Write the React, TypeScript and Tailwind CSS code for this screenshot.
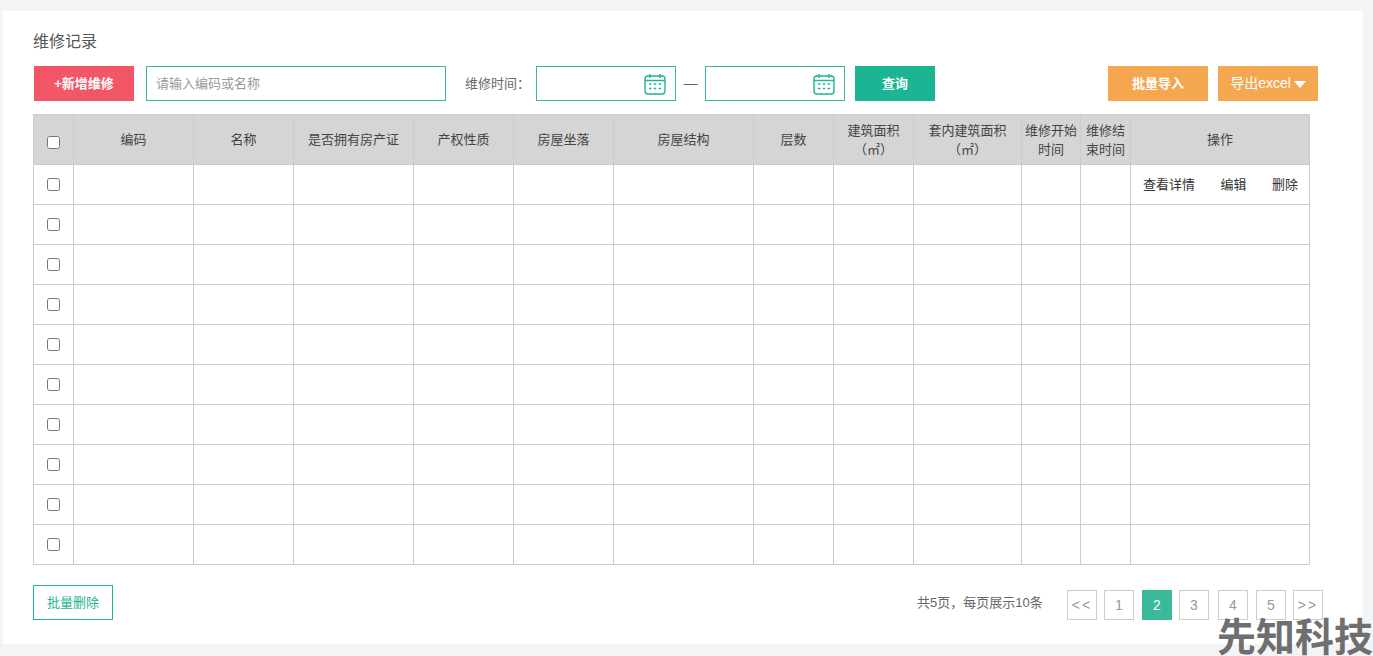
const columns = [
  { width: 'w-[40px]', label: '' },
  { width: 'w-[120px]', label: '编码' },
  { width: 'w-[100px]', label: '名称' },
  { width: 'w-[120px]', label: '是否拥有房产证' },
  { width: 'w-[100px]', label: '产权性质' },
  { width: 'w-[100px]', label: '房屋坐落' },
  { width: 'w-[140px]', label: '房屋结构' },
  { width: 'w-[80px]', label: '层数' },
  { width: 'w-[80px]', label: '建筑面积（㎡）' },
  { width: 'w-[108px]', label: '套内建筑面积（㎡）' },
  { width: 'w-[59px]', label: '维修开始时间' },
  { width: 'w-[50px]', label: '维修结束时间' },
  { width: 'w-[179px]', label: '操作' },
];

const rows = [0, 1, 2, 3, 4, 5, 6, 7, 8, 9];
const pages = [
  { label: '<<', cls: 'w-[30px] mr-[7px] text-[#999] tracking-[2px]' },
  { label: '1', cls: 'w-[30px] mr-[8px] text-[#999]' },
  { label: '2', cls: 'w-[30px] mr-[7px] !border-[#3ab99b] bg-[#3ab99b] text-white' },
  { label: '3', cls: 'w-[30px] mr-[9px] text-[#999]' },
  { label: '4', cls: 'w-[30px] mr-[8px] text-[#999]' },
  { label: '5', cls: 'w-[30px] mr-[7px] text-[#999]' },
  { label: '>>', cls: 'w-[30px] text-[#999] tracking-[2px]' },
];

function CalendarIcon() {
  return (
    <svg viewBox="0 0 22 22" className="h-[22px] w-[22px]" fill="none" stroke="#1fb595">
      <rect x="1" y="3" width="20" height="18" rx="3" strokeWidth="1.4" />
      <path d="M1 7.5h20M6 1v4M16 1v4" strokeWidth="1.4" />
      <path d="M5 11h2.4M9.8 11h2.4M14.6 11h2.4M5 15.5h2.4M9.8 15.5h2.4M14.6 15.5h2.4" strokeWidth="1.6" />
    </svg>
  );
}

function DateInput() {
  return (
    <div className="flex h-[35px] w-[140px] items-center justify-end border border-[#3ab99b] bg-white pr-[9px]">
      <CalendarIcon />
    </div>
  );
}

export default function App() {
  return (
    <div className="relative h-[656px] overflow-hidden bg-[#f3f4f6] pt-[11px] pl-[3px] font-['Liberation_Sans','Noto_Sans_CJK_SC',sans-serif] text-[13px] text-[#555]">
      <div className="h-[633px] w-[1360px] bg-white pt-[20px] pl-[30px]">
        <h1 className="text-[16px] leading-[21px] font-normal text-[#555]">维修记录</h1>

        <div className="mt-[14px] flex h-[35px] items-center">
          <button className="ml-px h-[35px] w-[100px] bg-[#f25767] text-[13px] font-bold text-white">+新增维修</button>
          <input
            placeholder="请输入编码或名称"
            className="ml-[12px] h-[35px] w-[300px] border border-[#3ab99b] px-[9px] text-[13px] outline-none placeholder:text-[#999]"
          />
          <span className="mr-[9px] ml-[19px] w-[62px] whitespace-nowrap text-[13px] text-[#666]">维修时间：</span>
          <DateInput />
          <span className="w-[29px] text-center text-[14px] text-[#666]">—</span>
          <DateInput />
          <button className="ml-[10px] h-[35px] w-[80px] bg-[#1bb594] text-[13px] font-bold text-white">查询</button>
          <button className="ml-[173px] h-[35px] w-[100px] bg-[#f5a74f] text-[13px] font-bold text-white">批量导入</button>
          <button className="ml-[10px] flex h-[35px] w-[100px] items-center justify-center gap-[3px] bg-[#f5a74f] text-[14px] text-white">
            导出excel
            <span className="mt-[2px] h-0 w-0 border-x-[6px] border-t-[7px] border-x-transparent border-t-white" />
          </button>
        </div>

        <table className="mt-[13px] w-[1277px] table-fixed border-collapse border border-[#ccc] text-center text-[13px]">
          <colgroup>
            {columns.map((col, i) => (
              <col key={i} className={col.width} />
            ))}
          </colgroup>
          <thead>
            <tr className="h-[50px] bg-[#d5d5d5] text-[#444]">
              {columns.map((col, i) => (
                <th key={i} className="border border-[#ccc] p-0 leading-[19px] font-normal">
                  {i === 0 ? <input type="checkbox" className="mt-[5px] block mx-auto" /> : col.label}
                </th>
              ))}
            </tr>
          </thead>
          <tbody>
            {rows.map((row) => (
              <tr key={row} className="h-[40px]">
                {columns.map((col, i) => (
                  <td key={i} className="border border-[#ccc] p-0 text-[#333]">
                    {i === 0 && <input type="checkbox" className="block mx-auto" />}
                    {i === 12 && row === 0 && (
                      <div className="flex items-center pr-[11px] pl-[12px] justify-between">
                        <span>查看详情</span>
                        <span>编辑</span>
                        <span>删除</span>
                      </div>
                    )}
                  </td>
                ))}
              </tr>
            ))}
          </tbody>
        </table>

        <div className="mt-[20px] flex items-end">
          <button className="h-[35px] w-[80px] border border-[#1bb594] bg-white text-[13px] text-[#1bb594]">批量删除</button>
          <span className="mb-[8px] ml-[804px] w-[150px] text-[13px] text-[#666]">共5页，每页展示10条</span>
          <div className="flex">
            {pages.map((p) => (
              <span key={p.label} className={`flex h-[30px] items-center justify-center border border-[#ccc] text-[14px] ${p.cls}`}>
                {p.label}
              </span>
            ))}
          </div>
        </div>
      </div>

      <div className="absolute right-0 bottom-[-3px] text-[39px] leading-[43px] font-bold whitespace-nowrap text-[#6f6f6f]">先知科技</div>
    </div>
  );
}
